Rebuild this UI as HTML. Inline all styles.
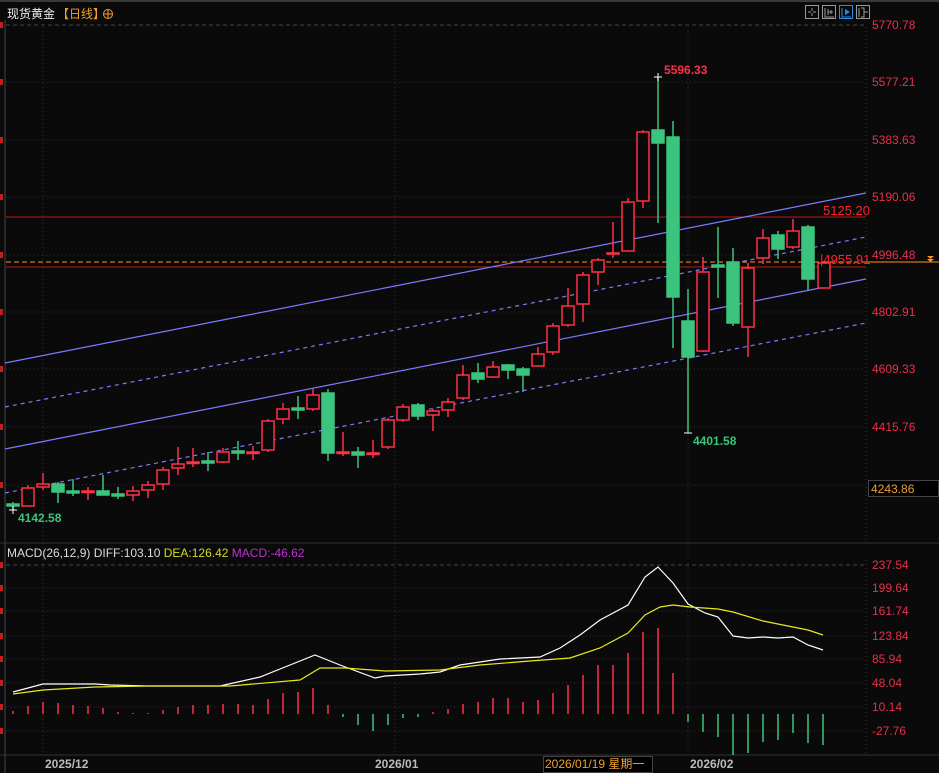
<!DOCTYPE html>
<html><head><meta charset="utf-8"><style>
html,body{margin:0;padding:0;background:#0a0a0a;}
svg{display:block;}
text{font-family:"Liberation Sans","Noto Sans CJK SC",sans-serif;}
</style></head><body>
<svg width="939" height="773" viewBox="0 0 939 773" xmlns="http://www.w3.org/2000/svg">
<rect width="939" height="773" fill="#0a0a0a"/>
<line x1="0" y1="1" x2="939" y2="1" stroke="#3a3a3a" stroke-width="2"/>
<!-- grid -->
<g stroke="#333" stroke-dasharray="1,3" stroke-width="1">
<line x1="6" y1="25" x2="866" y2="25" stroke-dasharray="4,3" stroke="#444"/>
<line x1="6" y1="82" x2="866" y2="82"/><line x1="6" y1="140" x2="866" y2="140"/>
<line x1="6" y1="197" x2="866" y2="197"/><line x1="6" y1="255" x2="866" y2="255"/>
<line x1="6" y1="312" x2="866" y2="312"/><line x1="6" y1="369" x2="866" y2="369"/>
<line x1="6" y1="427" x2="866" y2="427"/><line x1="6" y1="485" x2="866" y2="485"/>
<line x1="43" y1="27" x2="43" y2="755"/><line x1="395" y1="27" x2="395" y2="755"/><line x1="688" y1="27" x2="688" y2="755"/>
<line x1="866" y1="27" x2="866" y2="540"/>
<line x1="6" y1="565" x2="866" y2="565" stroke-dasharray="4,3" stroke="#444"/>
<line x1="6" y1="588" x2="866" y2="588"/><line x1="6" y1="611" x2="866" y2="611"/>
<line x1="6" y1="636" x2="866" y2="636"/><line x1="6" y1="659" x2="866" y2="659"/>
<line x1="6" y1="683" x2="866" y2="683"/><line x1="6" y1="707" x2="866" y2="707"/>
<line x1="6" y1="731" x2="866" y2="731"/><line x1="866" y1="560" x2="866" y2="755"/>
</g>
<line x1="5" y1="20" x2="5" y2="773" stroke="#444"/>
<line x1="0" y1="543" x2="939" y2="543" stroke="#333"/>
<line x1="0" y1="755" x2="939" y2="755" stroke="#333"/>
<g fill="#c02020"><rect x="0" y="22" width="3" height="6"/><rect x="0" y="79" width="3" height="6"/><rect x="0" y="137" width="3" height="6"/><rect x="0" y="194" width="3" height="6"/><rect x="0" y="252" width="3" height="6"/><rect x="0" y="309" width="3" height="6"/><rect x="0" y="366" width="3" height="6"/><rect x="0" y="424" width="3" height="6"/><rect x="0" y="482" width="3" height="6"/>
<rect x="0" y="562" width="3" height="6"/><rect x="0" y="585" width="3" height="6"/><rect x="0" y="608" width="3" height="6"/><rect x="0" y="633" width="3" height="6"/><rect x="0" y="656" width="3" height="6"/><rect x="0" y="680" width="3" height="6"/><rect x="0" y="704" width="3" height="6"/><rect x="0" y="728" width="3" height="6"/></g>
<!-- title -->
<text x="7" y="18" font-size="12" fill="#eee">现货黄金</text>
<text x="57" y="18" font-size="12" fill="#f0a030">【日线】</text>
<circle cx="108" cy="14" r="4.5" fill="none" stroke="#f0a030"/><line x1="103.5" y1="14" x2="112.5" y2="14" stroke="#f0a030"/><line x1="108" y1="9.5" x2="108" y2="18.5" stroke="#f0a030"/>
<!-- toolbar icons -->
<g fill="none" stroke="#999">
<rect x="805.5" y="5.5" width="13" height="13"/><rect x="822.5" y="5.5" width="13" height="13"/><rect x="839.5" y="5.5" width="13" height="13" stroke="#2a8ae0"/><rect x="856.5" y="5.5" width="13" height="13"/>
<path d="M812 8v3M812 13v3M808 12h3M813 12h3"/>
<path d="M825 8v9h9M828 9v6M831 10v4M833 12h-5"/>
<path d="M842 8v9h9" stroke="#2a8ae0"/>
<path d="M859 8v9M861 8h3v9h-3M864 12h4"/>
</g>
<path d="M845 9l5 3-5 3z" fill="#2a8ae0"/>
<!-- horizontal lines -->
<line x1="6" y1="217" x2="866" y2="217" stroke="#b81818"/>
<line x1="6" y1="267" x2="866" y2="267" stroke="#b81818"/>
<line x1="6" y1="262" x2="866" y2="262" stroke="#ff9020" stroke-dasharray="5,3"/>
<line x1="866" y1="262" x2="939" y2="262" stroke="#ff9020"/>
<path d="M927 256h7l-3.5 3z M927 259h7l-3.5 3z" fill="#ff9020"/>
<!-- trend lines -->
<g stroke="#7b7bff" stroke-width="1.2" fill="none">
<line x1="5" y1="363" x2="866" y2="193"/>
<line x1="5" y1="449" x2="866" y2="279"/>
<line x1="5" y1="407" x2="866" y2="237" stroke-dasharray="4,4"/>
<line x1="5" y1="493" x2="866" y2="323" stroke-dasharray="4,4"/>
</g>
<!-- candles -->
<g stroke-width="1.5">
<g stroke="#3ac47d" fill="#3ac47d">
<line x1="13" y1="502" x2="13" y2="510"/><rect x="7" y="504" width="12" height="2"/>
<line x1="58" y1="482" x2="58" y2="503"/><rect x="52" y="484" width="12" height="8"/>
<line x1="73" y1="479" x2="73" y2="496"/><rect x="67" y="491" width="12" height="2"/>
<line x1="103" y1="475" x2="103" y2="495"/><rect x="97" y="491" width="12" height="4"/>
<line x1="118" y1="487" x2="118" y2="499"/><rect x="112" y="494" width="12" height="2"/>
<line x1="208" y1="452" x2="208" y2="471"/><rect x="202" y="461" width="12" height="2"/>
<line x1="238" y1="441" x2="238" y2="460"/><rect x="232" y="451" width="12" height="2"/>
<line x1="298" y1="396" x2="298" y2="419"/><rect x="292" y="408" width="12" height="2"/>
<line x1="328" y1="389" x2="328" y2="461"/><rect x="322" y="393" width="12" height="60"/>
<line x1="358" y1="447" x2="358" y2="468"/><rect x="352" y="452" width="12" height="3"/>
<line x1="418" y1="403" x2="418" y2="420"/><rect x="412" y="405" width="12" height="11"/>
<line x1="478" y1="363" x2="478" y2="383"/><rect x="472" y="373" width="12" height="6"/>
<line x1="508" y1="364" x2="508" y2="379"/><rect x="502" y="365" width="12" height="5"/>
<line x1="523" y1="367" x2="523" y2="392"/><rect x="517" y="369" width="12" height="6"/>
<line x1="658" y1="77" x2="658" y2="223"/><rect x="652" y="130" width="12" height="13"/>
<line x1="673" y1="121" x2="673" y2="348"/><rect x="667" y="137" width="12" height="160"/>
<line x1="688" y1="289" x2="688" y2="433"/><rect x="682" y="321" width="12" height="36"/>
<line x1="718" y1="227" x2="718" y2="298"/><rect x="712" y="265" width="12" height="2"/>
<line x1="733" y1="248" x2="733" y2="326"/><rect x="727" y="262" width="12" height="61"/>
<line x1="778" y1="231" x2="778" y2="259"/><rect x="772" y="235" width="12" height="14"/>
<line x1="808" y1="225" x2="808" y2="290"/><rect x="802" y="227" width="12" height="52"/>
</g>
<g stroke="#ff3048" fill="#0a0a0a">
<line x1="28" y1="485" x2="28" y2="488"/><rect x="22" y="488" width="12" height="18"/>
<line x1="43" y1="473" x2="43" y2="490"/><rect x="37" y="484" width="12" height="3"/>
<line x1="88" y1="487" x2="88" y2="500"/><rect x="82" y="491" width="12" height="1.5"/>
<line x1="133" y1="486" x2="133" y2="501"/><rect x="127" y="491" width="12" height="4"/>
<line x1="148" y1="481" x2="148" y2="498"/><rect x="142" y="485" width="12" height="5"/>
<line x1="163" y1="467" x2="163" y2="490"/><rect x="157" y="470" width="12" height="14"/>
<line x1="178" y1="447" x2="178" y2="475"/><rect x="172" y="464" width="12" height="4"/>
<line x1="193" y1="448" x2="193" y2="467"/><rect x="187" y="462" width="12" height="1.5"/>
<line x1="223" y1="448" x2="223" y2="463"/><rect x="217" y="452" width="12" height="10"/>
<line x1="253" y1="446" x2="253" y2="460"/><rect x="247" y="452" width="12" height="1.5"/>
<line x1="268" y1="419" x2="268" y2="452"/><rect x="262" y="421" width="12" height="29"/>
<line x1="283" y1="403" x2="283" y2="424"/><rect x="277" y="409" width="12" height="10"/>
<line x1="313" y1="389" x2="313" y2="411"/><rect x="307" y="395" width="12" height="14"/>
<line x1="343" y1="432" x2="343" y2="456"/><rect x="337" y="452" width="12" height="1.5"/>
<line x1="373" y1="440" x2="373" y2="458"/><rect x="367" y="453" width="12" height="1.5"/>
<line x1="388" y1="418" x2="388" y2="449"/><rect x="382" y="420" width="12" height="27"/>
<line x1="403" y1="404" x2="403" y2="422"/><rect x="397" y="407" width="12" height="13"/>
<line x1="433" y1="409" x2="433" y2="431"/><rect x="427" y="411" width="12" height="4"/>
<line x1="448" y1="398" x2="448" y2="417"/><rect x="442" y="402" width="12" height="8"/>
<line x1="463" y1="365" x2="463" y2="400"/><rect x="457" y="375" width="12" height="23"/>
<line x1="493" y1="361" x2="493" y2="378"/><rect x="487" y="367" width="12" height="10"/>
<line x1="538" y1="347" x2="538" y2="366"/><rect x="532" y="354" width="12" height="12"/>
<line x1="553" y1="323" x2="553" y2="355"/><rect x="547" y="326" width="12" height="26"/>
<line x1="568" y1="288" x2="568" y2="327"/><rect x="562" y="306" width="12" height="19"/>
<line x1="583" y1="272" x2="583" y2="322"/><rect x="577" y="275" width="12" height="29"/>
<line x1="598" y1="258" x2="598" y2="285"/><rect x="592" y="260" width="12" height="12"/>
<line x1="613" y1="222" x2="613" y2="258"/><rect x="607" y="253" width="12" height="1"/>
<line x1="628" y1="198" x2="628" y2="251"/><rect x="622" y="202" width="12" height="49"/>
<line x1="643" y1="130" x2="643" y2="208"/><rect x="637" y="132" width="12" height="69"/>
<line x1="703" y1="257" x2="703" y2="352"/><rect x="697" y="272" width="12" height="79"/>
<line x1="748" y1="263" x2="748" y2="357"/><rect x="742" y="268" width="12" height="59"/>
<line x1="763" y1="229" x2="763" y2="264"/><rect x="757" y="238" width="12" height="20"/>
<line x1="793" y1="219" x2="793" y2="249"/><rect x="787" y="231" width="12" height="16"/>
<rect x="818" y="263" width="12" height="25"/>
</g>
</g>
<g stroke="#fff"><line x1="654" y1="77" x2="662" y2="77"/><line x1="658" y1="73" x2="658" y2="81"/><line x1="684" y1="433" x2="692" y2="433"/><line x1="9" y1="510" x2="17" y2="510"/><line x1="13" y1="506" x2="13" y2="514"/></g>
<text x="664" y="74" font-size="12" font-weight="bold" fill="#ff3048">5596.33</text>
<text x="693" y="445" font-size="12" font-weight="bold" fill="#3ac47d">4401.58</text>
<text x="18" y="522" font-size="12" font-weight="bold" fill="#3ac47d">4142.58</text>
<text x="823" y="215" font-size="13" fill="#ff2030">5125.20</text>
<text x="820" y="264" font-size="13" fill="#ff2030">|4955.91</text>
<!-- price axis -->
<g font-size="12" fill="#e8304a">
<text x="872" y="29">5770.78</text><text x="872" y="86">5577.21</text><text x="872" y="144">5383.63</text>
<text x="872" y="201">5190.06</text><text x="872" y="259">4996.48</text><text x="872" y="316">4802.91</text>
<text x="872" y="373">4609.33</text><text x="872" y="431">4415.76</text>
<text x="872" y="569">237.54</text><text x="872" y="592">199.64</text><text x="872" y="615">161.74</text>
<text x="872" y="640">123.84</text><text x="872" y="663">85.94</text><text x="872" y="687">48.04</text>
<text x="872" y="711">10.14</text><text x="872" y="735">-27.76</text>
</g>
<rect x="868.5" y="480.5" width="70" height="16" fill="#000" stroke="#444"/>
<text x="871" y="493" font-size="12" fill="#f0a030">4243.86</text>
<!-- MACD -->
<text x="7" y="557" font-size="12"><tspan fill="#ddd">MACD(26,12,9) DIFF:103.10 </tspan><tspan fill="#d8d820">DEA:126.42 </tspan><tspan fill="#c030d0">MACD:-46.62</tspan></text>
<g stroke-width="1.5">
<g stroke="#ff3048">
<line x1="13" y1="714" x2="13" y2="711"/><line x1="28" y1="714" x2="28" y2="706"/><line x1="43" y1="714" x2="43" y2="702"/><line x1="58" y1="714" x2="58" y2="703"/><line x1="73" y1="714" x2="73" y2="705"/><line x1="88" y1="714" x2="88" y2="706"/><line x1="103" y1="714" x2="103" y2="708"/><line x1="118" y1="714" x2="118" y2="712"/><line x1="133" y1="714" x2="133" y2="713"/><line x1="148" y1="714" x2="148" y2="713"/><line x1="163" y1="714" x2="163" y2="710"/><line x1="178" y1="714" x2="178" y2="707"/><line x1="193" y1="714" x2="193" y2="705"/><line x1="208" y1="714" x2="208" y2="705"/><line x1="223" y1="714" x2="223" y2="704"/><line x1="238" y1="714" x2="238" y2="704"/><line x1="253" y1="714" x2="253" y2="705"/><line x1="268" y1="714" x2="268" y2="699"/><line x1="283" y1="714" x2="283" y2="693"/><line x1="298" y1="714" x2="298" y2="692"/><line x1="313" y1="714" x2="313" y2="688"/><line x1="328" y1="714" x2="328" y2="705"/>
<line x1="433" y1="714" x2="433" y2="712"/><line x1="448" y1="714" x2="448" y2="709"/><line x1="463" y1="714" x2="463" y2="704"/><line x1="478" y1="714" x2="478" y2="702"/><line x1="493" y1="714" x2="493" y2="698"/><line x1="508" y1="714" x2="508" y2="698"/><line x1="523" y1="714" x2="523" y2="702"/><line x1="538" y1="714" x2="538" y2="700"/><line x1="553" y1="714" x2="553" y2="693"/><line x1="568" y1="714" x2="568" y2="685"/><line x1="583" y1="714" x2="583" y2="675"/><line x1="598" y1="714" x2="598" y2="665"/><line x1="613" y1="714" x2="613" y2="665"/><line x1="628" y1="714" x2="628" y2="653"/><line x1="643" y1="714" x2="643" y2="632"/><line x1="658" y1="714" x2="658" y2="628"/><line x1="673" y1="714" x2="673" y2="673"/>
</g>
<g stroke="#3ac47d">
<line x1="343" y1="714" x2="343" y2="717"/><line x1="358" y1="714" x2="358" y2="725"/><line x1="373" y1="714" x2="373" y2="731"/><line x1="388" y1="714" x2="388" y2="725"/><line x1="403" y1="714" x2="403" y2="718"/><line x1="418" y1="714" x2="418" y2="717"/>
<line x1="688" y1="714" x2="688" y2="722"/><line x1="703" y1="714" x2="703" y2="732"/><line x1="718" y1="714" x2="718" y2="737"/><line x1="733" y1="714" x2="733" y2="755"/><line x1="748" y1="714" x2="748" y2="753"/><line x1="763" y1="714" x2="763" y2="742"/><line x1="778" y1="714" x2="778" y2="740"/><line x1="793" y1="714" x2="793" y2="733"/><line x1="808" y1="714" x2="808" y2="743"/><line x1="823" y1="714" x2="823" y2="745"/>
</g>
</g>
<polyline fill="none" stroke="#ffffff" stroke-width="1.2" points="13,692 43,684 95,684 110,685 150,686 220,686 260,677 285,667 315,655 340,665 375,678 385,676 420,674 440,672 460,665 500,659 540,657 560,648 580,635 600,620 615,612 628,605 645,577 658,567 673,583 688,604 705,613 718,617 733,636 748,638 763,637 778,638 793,637 808,645 823,650"/>
<polyline fill="none" stroke="#e8e820" stroke-width="1.2" points="13,694 43,690 95,687 150,686 230,686 300,680 320,668 345,668 385,671 440,670 480,665 530,661 570,658 600,648 628,633 645,615 660,607 673,605 690,607 718,609 733,612 763,621 793,627 808,630 823,635"/>
<!-- dates -->
<text x="45" y="768" font-size="12" font-weight="bold" fill="#bbb">2025/12</text>
<text x="375" y="768" font-size="12" font-weight="bold" fill="#bbb">2026/01</text>
<rect x="543.5" y="756.5" width="109" height="16" fill="#000" stroke="#444"/>
<text x="545" y="768" font-size="12" fill="#f0a030">2026/01/19 星期一</text>
<text x="690" y="768" font-size="12" font-weight="bold" fill="#bbb">2026/02</text>
</svg>
</body></html>
